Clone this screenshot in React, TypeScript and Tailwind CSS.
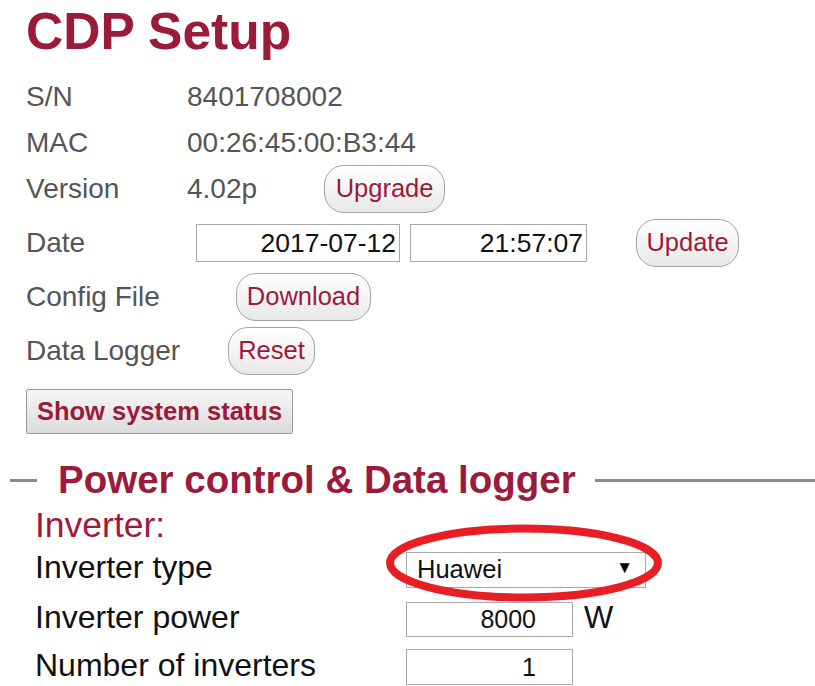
import React from "react";

const crimson = "text-[#9b1b3b]";

function PillButton({ label, className }: { label: string; className: string }) {
  return (
    <button
      className={`h-[48px] rounded-[20px] border border-[#a3a3a3] bg-linear-to-b from-white to-[#e8e8e8] text-[25.5px] leading-none text-[#9b1b3b] shadow-[inset_0_1px_0_#fff] ${className}`}
    >
      {label}
    </button>
  );
}

function InfoRow({ label, value, children }: { label: string; value: string; children?: React.ReactNode }) {
  return (
    <div className="flex h-[46px] items-center">
      <span className="w-[161px] shrink-0">{label}</span>
      <span>{value}</span>
      {children}
    </div>
  );
}

export default function App() {
  return (
    <div className="min-h-screen bg-white font-['Liberation_Sans',Arial,sans-serif] pt-[6px]">
      {/* Device info */}
      <div className="pl-[26px]">
        <h1 className={`text-[51.5px] leading-[50px] font-bold ${crimson}`}>CDP Setup</h1>

        <div className="mt-[18px] flex flex-col text-[28px] leading-none text-[#555]">
          <InfoRow label="S/N" value="8401708002" />
          <InfoRow label="MAC" value="00:26:45:00:B3:44" />
          <InfoRow label="Version" value="4.02p">
            <PillButton label="Upgrade" className="ml-[67px] h-[46px] w-[121px]" />
          </InfoRow>

          <div className="mt-[4px] flex h-[54px] items-center">
            <span className="w-[170px] shrink-0">Date</span>
            <input
              readOnly
              value="2017-07-12"
              className="h-[38px] w-[204px] border border-[#a9a9a9] pr-[3px] text-right text-[26.5px] text-[#111] outline-none"
            />
            <input
              readOnly
              value="21:57:07"
              className="ml-[10px] h-[38px] w-[177px] border border-[#a9a9a9] pr-[3px] text-right text-[26.5px] text-[#111] outline-none"
            />
            <PillButton label="Update" className="ml-[49px] w-[103px]" />
          </div>

          <div className="flex h-[54px] items-center">
            <span className="w-[210px] shrink-0">Config File</span>
            <PillButton label="Download" className="w-[135px]" />
          </div>

          <div className="flex h-[54px] items-center">
            <span className="w-[202px] shrink-0">Data Logger</span>
            <PillButton label="Reset" className="w-[87px]" />
          </div>

          <div className="mt-[11px]">
            <button className="h-[45px] w-[267px] rounded-[2px] border border-[#9a9a9a] bg-linear-to-b from-[#f6f6f6] to-[#dcdcdc] text-[25.5px] font-bold text-[#9b1b3b]">
              Show system status
            </button>
          </div>
        </div>
      </div>

      {/* Power control section */}
      <div className="mt-[26px] flex h-[40px] items-center">
        <div className="ml-[10px] h-[3px] w-[27px] bg-[#8c8c8c]" />
        <h2 className={`ml-[21px] mr-[19px] text-[38.5px] leading-none font-bold ${crimson}`}>
          Power control &amp; Data logger
        </h2>
        <div className="h-[3px] flex-1 bg-[#8c8c8c]" />
      </div>

      <div className="pl-[35px] text-[32px] leading-none text-[#111]">
        <div className={`mt-[8px] text-[35.5px] leading-[34px] ${crimson}`}>Inverter:</div>

        <div className="mt-[9px] flex items-baseline">
          <span className="w-[371px] shrink-0">Inverter type</span>
          <div className="relative">
            <select className="h-[36px] w-[240px] appearance-none border border-[#a9a9a9] bg-white pl-[10px] text-[25.5px] text-[#111] outline-none">
              <option>Huawei</option>
            </select>
            <span className="pointer-events-none absolute right-[13px] top-[8px] text-[17px] text-black">▼</span>
            {/* hand-drawn highlight */}
            <svg
              className="pointer-events-none absolute left-[-20px] top-[-27px]"
              width="276"
              height="78"
              viewBox="0 0 276 78"
            >
              <ellipse cx="138" cy="39" rx="134" ry="34.5" fill="none" stroke="#e81e25" strokeWidth="8" />
            </svg>
          </div>
        </div>

        <div className="mt-[13px] flex items-baseline">
          <span className="w-[371px] shrink-0">Inverter power</span>
          <input
            readOnly
            value="8000"
            className="h-[35px] w-[167px] border border-[#a9a9a9] pr-[36px] text-right text-[25px] text-[#111] outline-none"
          />
          <span className="ml-[11px] text-[31px]">W</span>
        </div>

        <div className="mt-[12px] flex items-baseline">
          <span className="w-[371px] shrink-0">Number of inverters</span>
          <input
            readOnly
            value="1"
            className="h-[36px] w-[167px] border border-[#a9a9a9] pr-[36px] text-right text-[25px] text-[#111] outline-none"
          />
        </div>
      </div>
    </div>
  );
}
